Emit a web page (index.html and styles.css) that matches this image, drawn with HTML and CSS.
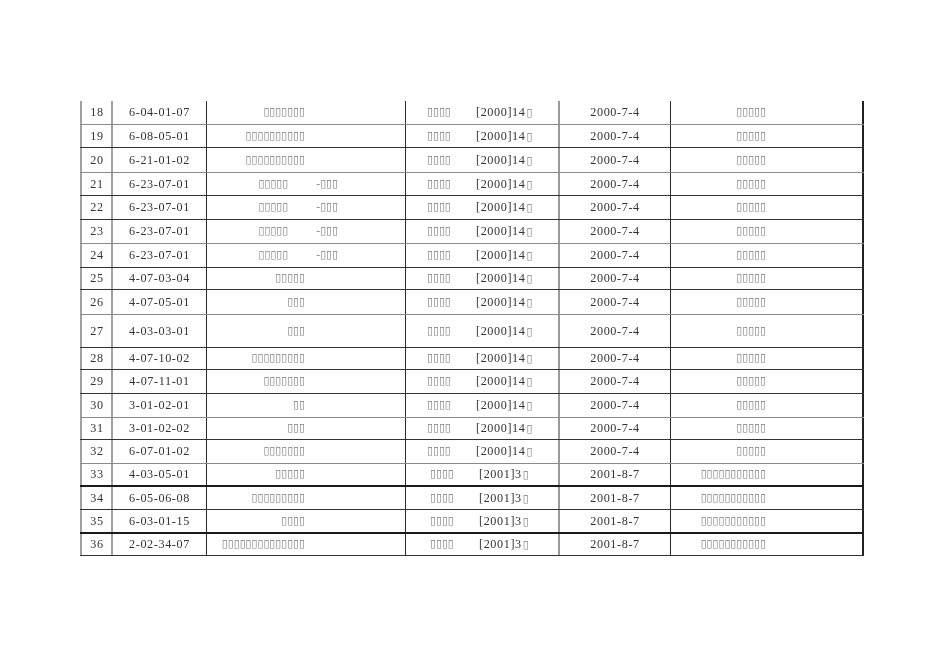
FILE: index.html
```html
<!DOCTYPE html>
<html>
<head>
<meta charset="utf-8">
<link rel="stylesheet" href="styles.css">
</head>
<body>
<div class="sheet">
  <div class="row h24 soft">
    <div class="c c1">18</div><div class="c c2">6-04-01-07</div><div class="c c3"><span class="t">▯▯▯▯▯▯▯</span></div>
    <div class="c c4"><span class="t a">▯▯▯▯</span><span>[2000]14<span class="t e">▯</span></span></div>
    <div class="c c5">2000-7-4</div><div class="c c6"><span class="t">▯▯▯▯▯</span></div>
  </div>
  <div class="row h23">
    <div class="c c1">19</div><div class="c c2">6-08-05-01</div><div class="c c3"><span class="t">▯▯▯▯▯▯▯▯▯▯</span></div>
    <div class="c c4"><span class="t a">▯▯▯▯</span><span>[2000]14<span class="t e">▯</span></span></div>
    <div class="c c5">2000-7-4</div><div class="c c6"><span class="t">▯▯▯▯▯</span></div>
  </div>
  <div class="row h25 soft">
    <div class="c c1">20</div><div class="c c2">6-21-01-02</div><div class="c c3"><span class="t">▯▯▯▯▯▯▯▯▯▯</span></div>
    <div class="c c4"><span class="t a">▯▯▯▯</span><span>[2000]14<span class="t e">▯</span></span></div>
    <div class="c c5">2000-7-4</div><div class="c c6"><span class="t">▯▯▯▯▯</span></div>
  </div>
  <div class="row h23">
    <div class="c c1">21</div><div class="c c2">6-23-07-01</div><div class="c c3 wide"><span class="t">▯▯▯▯▯</span><span class="t gap">-▯▯▯</span></div>
    <div class="c c4"><span class="t a">▯▯▯▯</span><span>[2000]14<span class="t e">▯</span></span></div>
    <div class="c c5">2000-7-4</div><div class="c c6"><span class="t">▯▯▯▯▯</span></div>
  </div>
  <div class="row h24">
    <div class="c c1">22</div><div class="c c2">6-23-07-01</div><div class="c c3 wide"><span class="t">▯▯▯▯▯</span><span class="t gap">-▯▯▯</span></div>
    <div class="c c4"><span class="t a">▯▯▯▯</span><span>[2000]14<span class="t e">▯</span></span></div>
    <div class="c c5">2000-7-4</div><div class="c c6"><span class="t">▯▯▯▯▯</span></div>
  </div>
  <div class="row h24 soft">
    <div class="c c1">23</div><div class="c c2">6-23-07-01</div><div class="c c3 wide"><span class="t">▯▯▯▯▯</span><span class="t gap">-▯▯▯</span></div>
    <div class="c c4"><span class="t a">▯▯▯▯</span><span>[2000]14<span class="t e">▯</span></span></div>
    <div class="c c5">2000-7-4</div><div class="c c6"><span class="t">▯▯▯▯▯</span></div>
  </div>
  <div class="row h24">
    <div class="c c1">24</div><div class="c c2">6-23-07-01</div><div class="c c3 wide"><span class="t">▯▯▯▯▯</span><span class="t gap">-▯▯▯</span></div>
    <div class="c c4"><span class="t a">▯▯▯▯</span><span>[2000]14<span class="t e">▯</span></span></div>
    <div class="c c5">2000-7-4</div><div class="c c6"><span class="t">▯▯▯▯▯</span></div>
  </div>
  <div class="row h22">
    <div class="c c1">25</div><div class="c c2">4-07-03-04</div><div class="c c3"><span class="t">▯▯▯▯▯</span></div>
    <div class="c c4"><span class="t a">▯▯▯▯</span><span>[2000]14<span class="t e">▯</span></span></div>
    <div class="c c5">2000-7-4</div><div class="c c6"><span class="t">▯▯▯▯▯</span></div>
  </div>
  <div class="row h25 soft">
    <div class="c c1">26</div><div class="c c2">4-07-05-01</div><div class="c c3"><span class="t">▯▯▯</span></div>
    <div class="c c4"><span class="t a">▯▯▯▯</span><span>[2000]14<span class="t e">▯</span></span></div>
    <div class="c c5">2000-7-4</div><div class="c c6"><span class="t">▯▯▯▯▯</span></div>
  </div>
  <div class="row h33">
    <div class="c c1">27</div><div class="c c2">4-03-03-01</div><div class="c c3"><span class="t">▯▯▯</span></div>
    <div class="c c4"><span class="t a">▯▯▯▯</span><span>[2000]14<span class="t e">▯</span></span></div>
    <div class="c c5">2000-7-4</div><div class="c c6"><span class="t">▯▯▯▯▯</span></div>
  </div>
  <div class="row h22">
    <div class="c c1">28</div><div class="c c2">4-07-10-02</div><div class="c c3"><span class="t">▯▯▯▯▯▯▯▯▯</span></div>
    <div class="c c4"><span class="t a">▯▯▯▯</span><span>[2000]14<span class="t e">▯</span></span></div>
    <div class="c c5">2000-7-4</div><div class="c c6"><span class="t">▯▯▯▯▯</span></div>
  </div>
  <div class="row h24">
    <div class="c c1">29</div><div class="c c2">4-07-11-01</div><div class="c c3"><span class="t">▯▯▯▯▯▯▯</span></div>
    <div class="c c4"><span class="t a">▯▯▯▯</span><span>[2000]14<span class="t e">▯</span></span></div>
    <div class="c c5">2000-7-4</div><div class="c c6"><span class="t">▯▯▯▯▯</span></div>
  </div>
  <div class="row h24 soft">
    <div class="c c1">30</div><div class="c c2">3-01-02-01</div><div class="c c3"><span class="t">▯▯</span></div>
    <div class="c c4"><span class="t a">▯▯▯▯</span><span>[2000]14<span class="t e">▯</span></span></div>
    <div class="c c5">2000-7-4</div><div class="c c6"><span class="t">▯▯▯▯▯</span></div>
  </div>
  <div class="row h22">
    <div class="c c1">31</div><div class="c c2">3-01-02-02</div><div class="c c3"><span class="t">▯▯▯</span></div>
    <div class="c c4"><span class="t a">▯▯▯▯</span><span>[2000]14<span class="t e">▯</span></span></div>
    <div class="c c5">2000-7-4</div><div class="c c6"><span class="t">▯▯▯▯▯</span></div>
  </div>
  <div class="row h24 soft">
    <div class="c c1">32</div><div class="c c2">6-07-01-02</div><div class="c c3"><span class="t">▯▯▯▯▯▯▯</span></div>
    <div class="c c4"><span class="t a">▯▯▯▯</span><span>[2000]14<span class="t e">▯</span></span></div>
    <div class="c c5">2000-7-4</div><div class="c c6"><span class="t">▯▯▯▯▯</span></div>
  </div>
  <div class="row h23 thick">
    <div class="c c1">33</div><div class="c c2">4-03-05-01</div><div class="c c3"><span class="t">▯▯▯▯▯</span></div>
    <div class="c c4 y01"><span class="t a">▯▯▯▯</span><span>[2001]3<span class="t e">▯</span></span></div>
    <div class="c c5">2001-8-7</div><div class="c c6"><span class="t">▯▯▯▯▯▯▯▯▯▯▯</span></div>
  </div>
  <div class="row h23">
    <div class="c c1">34</div><div class="c c2">6-05-06-08</div><div class="c c3"><span class="t">▯▯▯▯▯▯▯▯▯</span></div>
    <div class="c c4 y01"><span class="t a">▯▯▯▯</span><span>[2001]3<span class="t e">▯</span></span></div>
    <div class="c c5">2001-8-7</div><div class="c c6"><span class="t">▯▯▯▯▯▯▯▯▯▯▯</span></div>
  </div>
  <div class="row h24 thick">
    <div class="c c1">35</div><div class="c c2">6-03-01-15</div><div class="c c3"><span class="t">▯▯▯▯</span></div>
    <div class="c c4 y01"><span class="t a">▯▯▯▯</span><span>[2001]3<span class="t e">▯</span></span></div>
    <div class="c c5">2001-8-7</div><div class="c c6"><span class="t">▯▯▯▯▯▯▯▯▯▯▯</span></div>
  </div>
  <div class="row h22">
    <div class="c c1">36</div><div class="c c2">2-02-34-07</div><div class="c c3"><span class="t">▯▯▯▯▯▯▯▯▯▯▯▯▯▯</span></div>
    <div class="c c4 y01"><span class="t a">▯▯▯▯</span><span>[2001]3<span class="t e">▯</span></span></div>
    <div class="c c5">2001-8-7</div><div class="c c6"><span class="t">▯▯▯▯▯▯▯▯▯▯▯</span></div>
  </div>
</div>
</body>
</html>
```

FILE: styles.css
```css
html, body {
  margin: 0;
  padding: 0;
  background: #ffffff;
}

body {
  padding: 101px 0 0 80px;
  font-family: "Liberation Serif", "Times New Roman", serif;
  font-size: 12.2px;
  color: #333333;
}

.sheet {
  width: 784px;
  display: flex;
  flex-direction: column;
  will-change: transform;
}

.row {
  display: grid;
  grid-template-columns: 31px 95px 199px 153px 112px 194px;
  box-sizing: border-box;
  border-bottom: 1px solid #333333;
}

.row.soft { border-bottom-color: #8a8a8a; }
.row.thick { border-bottom: 2px solid #1a1a1a; }

.h22 { height: 22px; }
.h23 { height: 23px; }
.h24 { height: 24px; }
.h25 { height: 25px; }
.h33 { height: 33px; }

.c {
  box-sizing: border-box;
  display: flex;
  align-items: center;
  white-space: pre;
  letter-spacing: 0.6px;
  line-height: 1;
}

.c1 { border-left: 2px solid #a0a0a0; justify-content: center; padding-left: 1px; }
.c2 { border-left: 2px solid #a0a0a0; justify-content: center; }
.c3 { border-left: 1px solid #2a2a2a; justify-content: flex-end; padding-right: 100px; }
.c3.wide { padding-right: 67px; }
.c4 { border-left: 1px solid #2a2a2a; padding-left: 21px; }
.c4.y01 { padding-left: 24px; }
.c5 { border-left: 2px solid #9a9a9a; justify-content: center; }
.c6 { border-left: 1px solid #2a2a2a; border-right: 2px solid #222222; justify-content: flex-end; padding-right: 96px; }

.t {
  font-family: "DejaVu Sans", sans-serif;
  font-size: 10.8px;
  color: #808080;
  letter-spacing: 0;
}

.e { margin-left: 1px; }

.a {
  display: inline-block;
  width: 49px;
}

.gap { margin-left: 28px; }
```
